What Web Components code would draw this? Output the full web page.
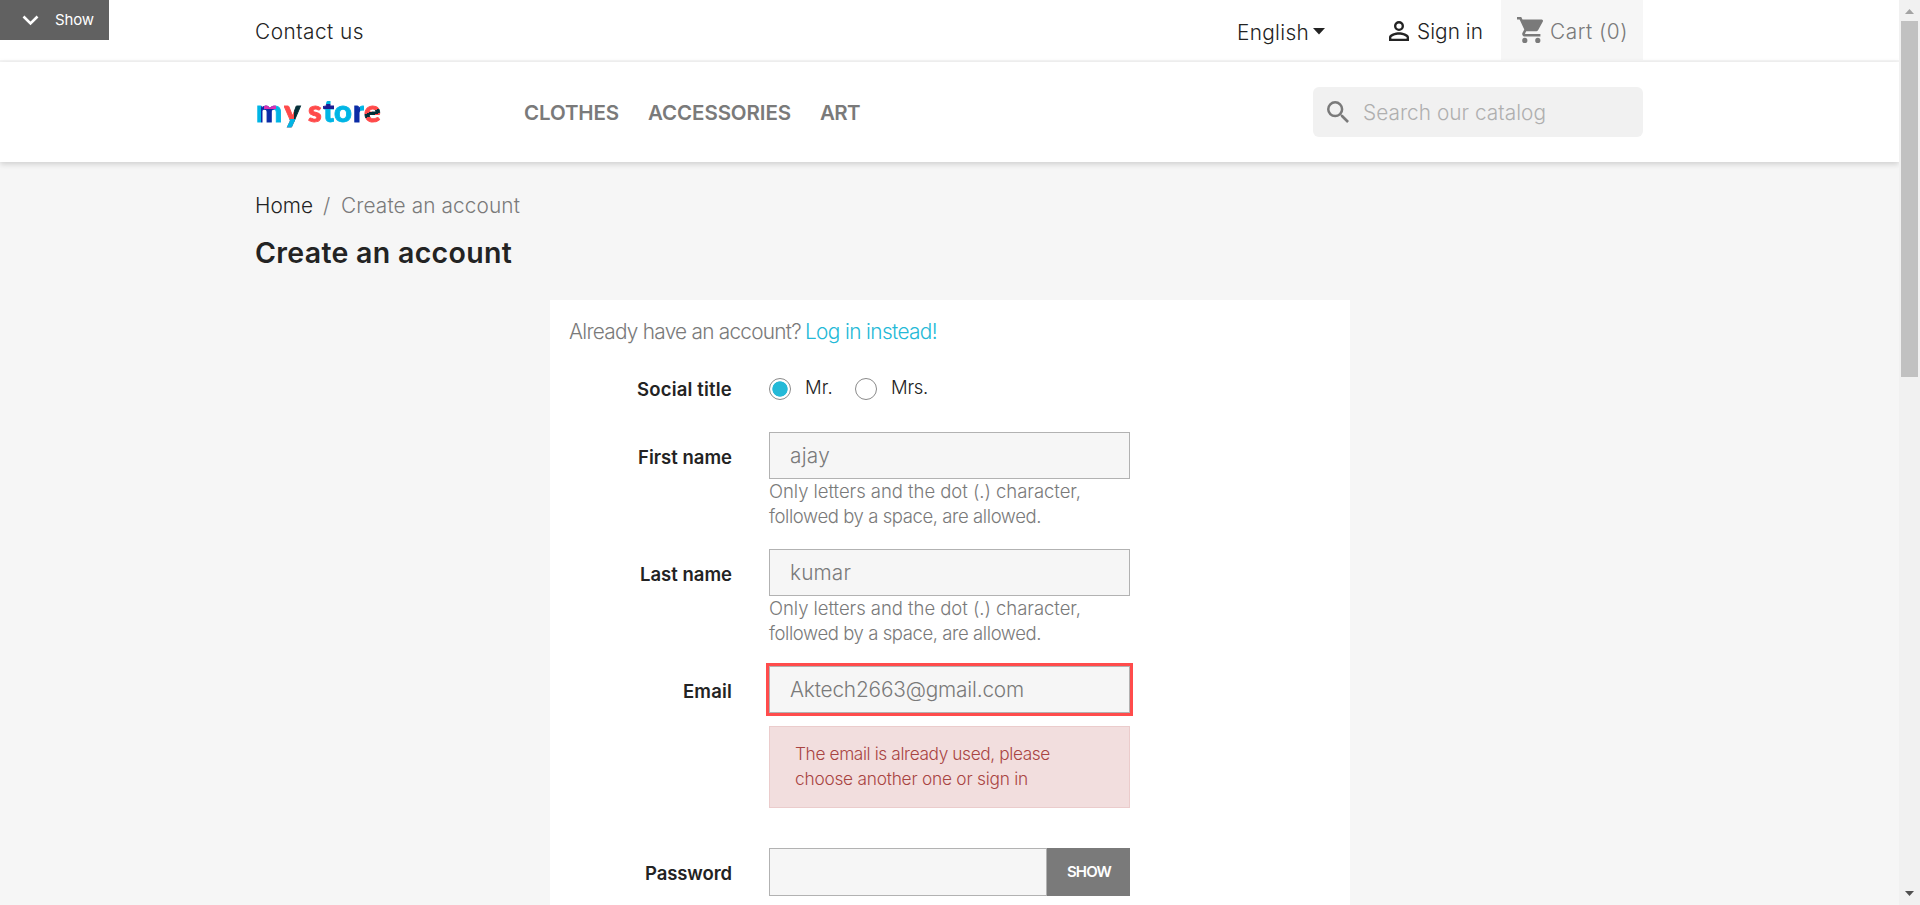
<!DOCTYPE html>
<html lang="en">
<head>
<meta charset="utf-8">
<title>Create an account</title>
<style>
html,body{margin:0;height:100%;overflow:hidden}
body{font-family:Inter,"Noto Sans",sans-serif;background:#f6f6f6;color:#232323}
</style>
</head>
<body>
<store-page></store-page>
<script>
const define=(name,css,html,after)=>customElements.define(name,class extends HTMLElement{
  connectedCallback(){
    if(this.shadowRoot)return;
    const root=this.attachShadow({mode:'open'});
    const t=document.createElement('template');
    t.innerHTML='<style>'+css+'</style>'+html;
    root.append(t.content.cloneNode(true));
    if(after)after(this,root);
  }
});

/* A single line of text whose tracking is set so that it fills the width w. */
define('fit-text',`:host{display:inline-block;white-space:nowrap;font-size:20.800px;font-weight:360;line-height:24px}
span{display:inline-block;white-space:pre}`,`<span><slot></slot></span>`,(el,root)=>{
  const w=+el.getAttribute('w'),s=root.querySelector('span');
  const n=el.textContent.length;
  s.style.letterSpacing=((w-s.getBoundingClientRect().width)/n)+'px';
  el.style.width=w+'px';
});

define('top-bar',`:host{display:flex;box-sizing:border-box;height:62px;border-bottom:2px solid #f6f6f6;background:#fff;padding-left:255px;color:#232323}
.item{display:flex;align-items:center;padding-top:3px;height:57px}
.contact{width:982px}.lang{padding-top:5px;height:55px;width:152px}
.lang svg{margin:0 0 2px 4px}.sign{width:112px}.sign svg{margin:-1px 8px 0 0}
.cart{width:142px;height:60px;box-sizing:border-box;background:#f6f6f6;color:#7a7a7a}
.cart svg{margin:-3px 7px 0 16px}`,
`<div class="item contact"><fit-text w="109">Contact us</fit-text></div>
<div class="item lang"><fit-text w="72">English</fit-text><svg width="12" height="7"><path d="M0 0h12L6 6.500z" fill="#232323"/></svg></div>
<div class="item sign"><svg width="20" height="20" viewBox="4 4 16 16"><path fill="#232323" d="M12 5.900a2.100 2.100 0 1 1 0 4.200 2.100 2.100 0 0 1 0-4.200m0 9c2.970 0 6.100 1.460 6.100 2.100v1.100H5.900V17c0-.640 3.130-2.100 6.100-2.100M12 4a4 4 0 1 0 0 8 4 4 0 0 0 0-8m0 9c-2.670 0-8 1.340-8 4v3h16v-3c0-2.660-5.330-4-8-4z"/></svg><fit-text w="66">Sign in</fit-text></div>
<div class="item cart"><svg width="26" height="26" viewBox="1 2 20 20"><path fill="#7a7a7a" d="M7 18a2 2 0 1 0 0 4 2 2 0 0 0 0-4M1 2v2h2l3.600 7.590-1.350 2.450C4.520 15.370 5.480 17 7 17h12v-2H7.420a.25.25 0 0 1-.25-.25L8.100 13h7.450c.75 0 1.410-.410 1.750-1.030l3.580-6.490A1 1 0 0 0 20 4H5.210l-.94-2zm16 16a2 2 0 1 0 0 4 2 2 0 0 0 0-4"/></svg><fit-text w="78">Cart (0)</fit-text></div>`);

define('store-logo',`:host{display:flex;width:128px;font:900 31px/38px Lato,sans-serif;margin-top:-5px}
span{display:block;color:transparent;background-clip:text;-webkit-background-clip:text;flex:none;-webkit-text-stroke:.9px transparent}
.m{width:28px;background-image:linear-gradient(#df2fb2,#df2fb2),linear-gradient(90deg,#00b5e5 5px,#0a2ba5 5px 18px,#00b5e5 18px);background-size:12px 5px,100%;background-position:8px 13px,0 0;background-repeat:no-repeat}
.y{width:24px;background-image:linear-gradient(transparent 28px,#00b5e5 28px),linear-gradient(90deg,#ff4a4a 10px,#052f38 10px)}
.s{width:15px;background-image:linear-gradient(#ff4a4a,#ff4a4a)}
.t{width:11px;background-image:linear-gradient(#00b5e5 13px,#1c1d93 13px 18px,#00b5e5 18px)}
.o{width:19px;background-image:linear-gradient(#00b5e5,#00b5e5)}
.r{width:11px;background-image:linear-gradient(90deg,#0a2ba5 7px,#00b5e5 7px)}
.e{width:18px;background-image:linear-gradient(160deg,#ff4a4a 22px,#052f38 22px 26px,#ff4a4a 26px)}`,
`<span class="m">m</span><span class="y">y</span><span class="s">s</span><span class="t">t</span><span class="o">o</span><span class="r">r</span><span class="e">e</span>`);

define('main-nav',`:host{display:flex;box-sizing:border-box;height:100px;align-items:center;background:#fff;padding-left:256px;box-shadow:0 2px 6px rgba(0,0,0,.17);position:relative;color:#7a7a7a}
nav{display:flex;width:789px;margin-left:140px;gap:29px;padding-top:1px}
nav fit-text{font-weight:560;font-size:20.500px}
.search{display:flex;align-items:center;width:330px;height:50px;border-radius:6px;background:#f1f1f1;color:#afafaf}
svg{margin:0 14px 0 14px}.search fit-text{padding-top:1px}`,
`<store-logo></store-logo>
<nav><fit-text w="95">CLOTHES</fit-text><fit-text w="143">ACCESSORIES</fit-text><fit-text w="40">ART</fit-text></nav>
<div class="search"><svg width="22" height="22" viewBox="3 3 17.500 17.500"><path fill="#7a7a7a" d="M15.500 14h-.790l-.280-.270A6.470 6.470 0 0 0 16 9.500 6.500 6.500 0 1 0 9.500 16c1.610 0 3.090-.590 4.230-1.570l.270.280v.790l5 4.990L20.490 19zm-6 0a4.500 4.500 0 1 1 0-9 4.500 4.500 0 0 1 0 9"/></svg><fit-text w="183">Search our catalog</fit-text></div>`);

define('form-row',`:host{display:grid;grid-template-columns:162px 361px;column-gap:37px;margin-bottom:20px}
.label{text-align:right;padding-top:13px}
.label fit-text{font-size:18.500px;font-weight:620}`,
`<div class="label"></div><div><slot></slot></div>`,(el,root)=>{
  const f=document.createElement('fit-text');
  f.textContent=el.getAttribute('label');f.setAttribute('w',el.getAttribute('lw'));
  root.querySelector('.label').append(f);
});

define('text-field',`:host{display:flex;align-items:center;box-sizing:border-box;height:47px;background:#f6f6f6;border:1px solid #b2b2b2;padding-left:20px;color:#7a7a7a}
:host([invalid]){box-shadow:0 0 0 3px #ff4c4c}`,`<slot></slot>`);

define('field-help',`:host{display:block;height:50px;color:#7a7a7a}
fit-text{display:block;font-size:18.500px;line-height:25px}`,
`<fit-text w="312">Only letters and the dot (.) character,</fit-text><fit-text w="272">followed by a space, are allowed.</fit-text>`);

define('alert-box',`:host{display:block;box-sizing:border-box;height:82px;margin:13px 0 20px;padding:14px 0 0 25px;background:#f2dede;border:1px solid #ebcccc;color:#a94442}
fit-text{display:block;font-size:17.300px;line-height:25px}`,
`<fit-text w="255">The email is already used, please</fit-text><fit-text w="233">choose another one or sign in</fit-text>`);

define('radio-option',`:host{display:flex;align-items:center;height:24px;color:#232323}
i{box-sizing:border-box;width:22px;height:22px;border:1px solid #8a8a8a;border-radius:50%;margin-right:14px;background:#fff}
:host([checked]) i{background:radial-gradient(circle,#24b9d7 7.300px,#fff 8px)}
fit-text{font-size:18.500px;margin-top:-5px}`,`<i></i><slot></slot>`,(el,root)=>{
  const f=document.createElement('fit-text');
  f.textContent=el.getAttribute('text');f.setAttribute('w',el.getAttribute('w'));
  root.append(f);
});

define('password-field',`:host{display:flex;height:48px}
text-field{width:278px;height:48px}
button{flex:1;border:0;padding:0;background:#7a7a7a;color:#fff;font-family:inherit}
fit-text{font-size:15px;font-weight:620;margin-left:1px}`,
`<text-field></text-field><button><fit-text w="44">SHOW</fit-text></button>`);

define('account-form',`:host{display:block;box-sizing:border-box;width:800px;height:700px;padding:20px 20px 0;margin:31px 0 0 550px;background:#fff}
.login{height:24px;color:#7a7a7a;display:flex;gap:4px;margin:0 0 20px -1px}
.login .link{color:#24b9d7}
.social{margin-bottom:17px;padding-top:0;height:51px}
.radios{display:flex;gap:22px;padding-top:13px}`,
`<div class="login"><fit-text w="232">Already have an account?</fit-text><fit-text class="link" w="132">Log in instead!</fit-text></div>
<form-row class="social" label="Social title" lw="95"><div class="radios"><radio-option checked text="Mr." w="28"></radio-option><radio-option text="Mrs." w="37"></radio-option></div></form-row>
<form-row label="First name" lw="94"><text-field><fit-text w="40">ajay</fit-text></text-field><field-help></field-help></form-row>
<form-row label="Last name" lw="92"><text-field><fit-text w="61">kumar</fit-text></text-field><field-help></field-help></form-row>
<form-row label="Email" lw="49"><text-field invalid><fit-text w="234">Aktech2663@gmail.com</fit-text></text-field><alert-box></alert-box></form-row>
<form-row label="Password" lw="87"><password-field></password-field></form-row>`);

define('page-heading',`:host{display:block;padding:32px 0 0 255px}
.crumbs{display:flex;height:24px}.now{color:#7a7a7a}
.slash{width:28px;text-align:center;color:#7a7a7a}
h1{margin:17px 0 0;height:34px;line-height:34px}
h1 fit-text{font-size:28.500px;font-weight:620;line-height:34px}`,
`<div class="crumbs"><fit-text w="58">Home</fit-text><span class="slash"><fit-text w="8">/</fit-text></span><fit-text class="now" w="179">Create an account</fit-text></div>
<h1><fit-text w="257">Create an account</fit-text></h1>`);

define('scroll-bar',`:host{display:flex;flex-direction:column;align-items:center;width:21px;height:905px;background:#f1f1f1}
.up{margin-top:9px}.thumb{width:17px;height:356px;background:#c1c1c1;margin:7px 0 auto}.down{margin-bottom:9px}svg{display:block}`,
`<svg class="up" width="9" height="5"><path d="M0 5h9L4.500 0z" fill="#a3a3a3"/></svg><div class="thumb"></div><svg class="down" width="9" height="5"><path d="M0 0h9L4.500 5z" fill="#505050"/></svg>`);

define('debug-tab',`:host{position:absolute;left:0;top:0;width:109px;height:40px;background:#616161;color:#fff;display:flex;align-items:center}
svg{margin:0 16px 0 22px}fit-text{font-size:15px;font-weight:400}`,
`<svg width="17" height="11"><path d="M1.500 1.500l7 7 7-7" fill="none" stroke="#fff" stroke-width="2.600"/></svg><fit-text w="39">Show</fit-text>`);

define('store-page',`:host{display:flex;height:905px;overflow:hidden;position:relative}
main{width:1899px;height:905px;overflow:hidden}`,
`<main><top-bar></top-bar><main-nav></main-nav><page-heading></page-heading><account-form></account-form></main><scroll-bar></scroll-bar><debug-tab></debug-tab>`);
</script>
</body>
</html>
